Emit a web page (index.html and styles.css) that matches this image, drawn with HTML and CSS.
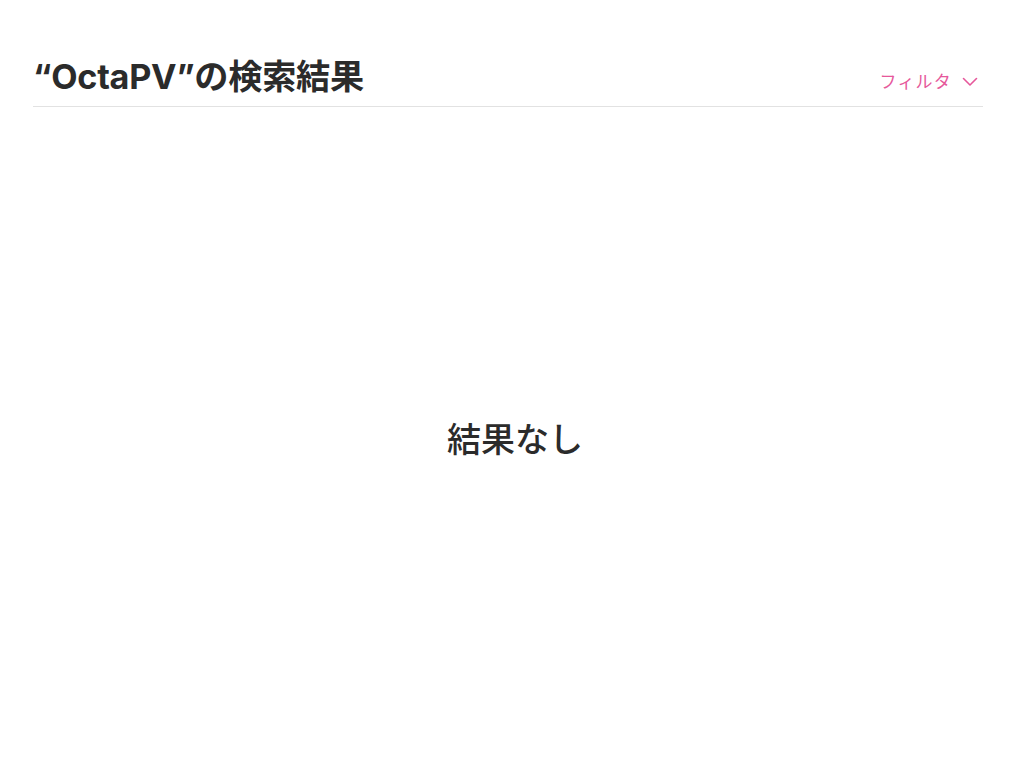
FILE: index.html
```html
<!DOCTYPE html>
<html lang="ja">
<head>
<meta charset="utf-8">
<link rel="stylesheet" href="styles.css">
</head>
<body>
<div class="page">
  <header class="header">
    <h1 class="title">“OctaPV”の検索結果</h1>
    <button class="filter">フィルタ
      <svg class="chev" width="16" height="10" viewBox="0 0 16 10"><path d="M1.5 1.5 L8 8 L14.5 1.5" fill="none" stroke="currentColor" stroke-width="1.6" stroke-linecap="round" stroke-linejoin="round"/></svg>
    </button>
  </header>
  <main class="empty">
    <p class="empty-text">結果なし</p>
  </main>
</div>
</body>
</html>
```
FILE: styles.css
```css
html, body {
  margin: 0;
  padding: 0;
  background: #fff;
}
body {
  font-family: Inter, "Noto Sans CJK JP", sans-serif;
  color: #2b2b2b;
}
.page {
  padding: 0 41px 0 33px;
  height: 763px;
  display: flex;
  flex-direction: column;
  box-sizing: border-box;
}
.header {
  display: flex;
  align-items: flex-end;
  justify-content: space-between;
  border-bottom: 1px solid #e2e2e2;
  padding-top: 54px;
  padding-bottom: 7px;
}
.title {
  margin: 0;
  font-size: 34.2px;
  font-weight: 700;
  line-height: 45px;
  letter-spacing: -0.25px;
  padding-left: 0;
}
.filter {
  border: 0;
  background: none;
  padding: 0 5px 0 0;
  margin-bottom: 6px;
  color: #e6589b;
  font-family: inherit;
  font-size: 17px;
  line-height: 22px;
  display: flex;
  align-items: center;
  gap: 10px;
  letter-spacing: 1.2px;
}
.chev {
  display: block;
}
.empty {
  flex: 1;
  display: flex;
  justify-content: center;
  padding-top: 311px;
}
.empty-text {
  margin: 0;
  font-size: 34px;
  line-height: 44px;
  font-weight: 500;
  padding-left: 14px;
}
```
